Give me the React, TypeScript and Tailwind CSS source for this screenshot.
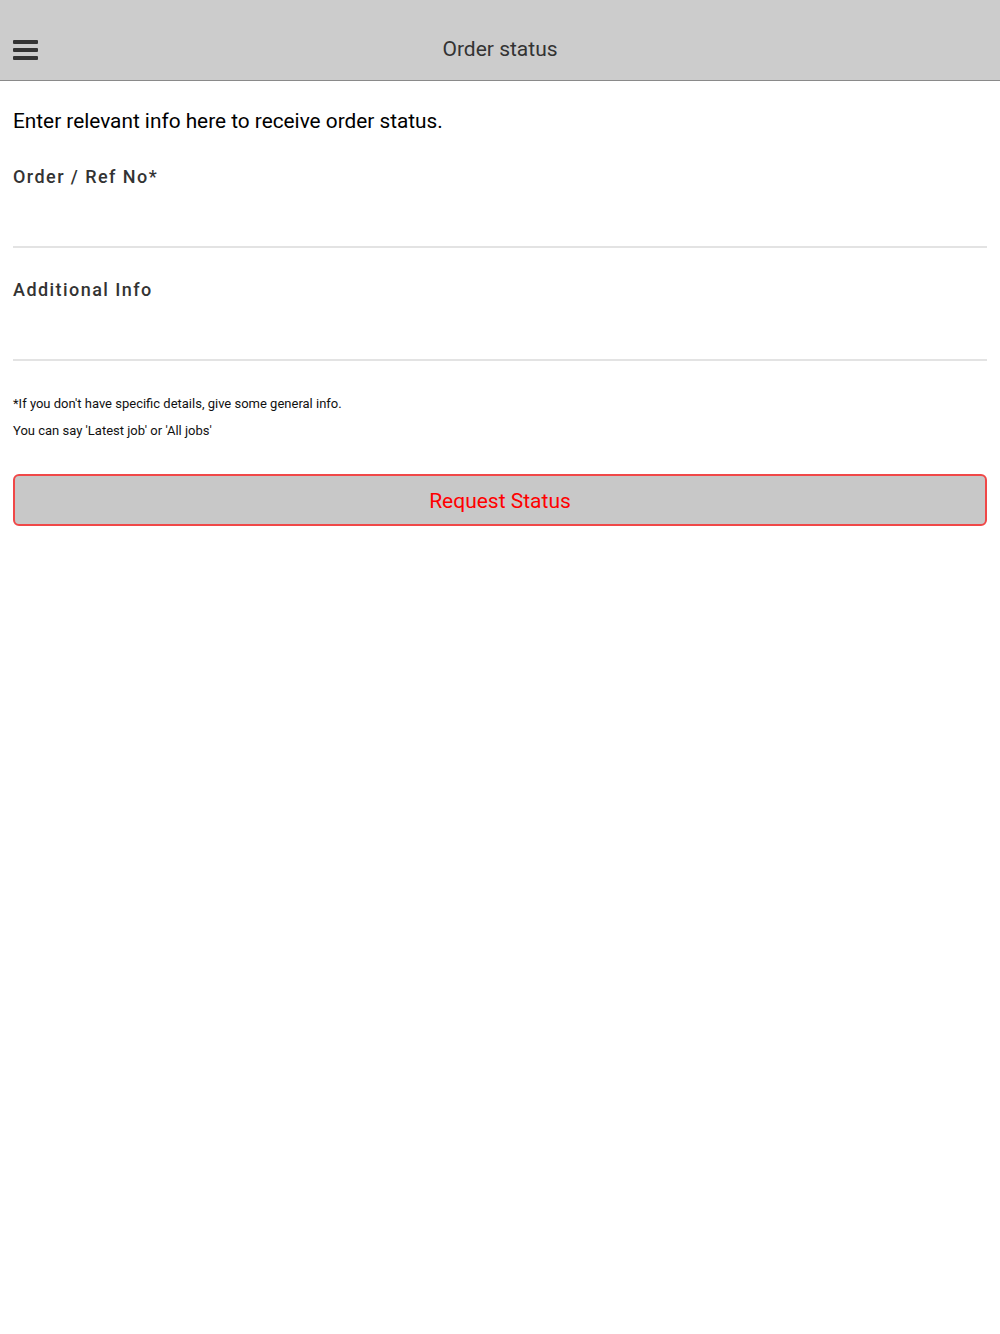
import React from "react";

export default function App() {
  return (
    <div className="min-h-[1334px] bg-white" style={{ fontFamily: "Roboto, 'Liberation Sans', sans-serif" }}>
      <header className="h-[81px] bg-[#cccccc] border-b border-[#8a8a8a] flex items-center relative pt-[20px]">
        <div className="absolute left-[13px] top-[40px] w-[25px] flex flex-col gap-[4px]">
          <div className="h-[4px] bg-[#333333] rounded-[1px]" />
          <div className="h-[4px] bg-[#333333] rounded-[1px]" />
          <div className="h-[4px] bg-[#333333] rounded-[1px]" />
        </div>
        <div className="flex-1 text-center text-[21px] text-[#333333]">Order status</div>
      </header>
      <main className="px-[13px]">
        <p className="mt-[26px] text-[20.8px] leading-[28px] text-black">Enter relevant info here to receive order status.</p>
        <div className="mt-[30px]">
          <label className="block text-[18px] leading-[24px] font-medium tracking-[0.08em] text-[#333333]">Order / Ref No*</label>
          <div className="h-[59px] border-b-2 border-[#e3e3e3]" />
        </div>
        <div className="mt-[30px]">
          <label className="block text-[18px] leading-[24px] font-medium tracking-[0.08em] text-[#333333]">Additional Info</label>
          <div className="h-[59px] border-b-2 border-[#e3e3e3]" />
        </div>
        <p className="mt-[34px] text-[13px] leading-[18px] text-[#111111]">*If you don't have specific details, give some general info.</p>
        <p className="mt-[9px] text-[13px] leading-[18px] text-[#111111]">You can say 'Latest job' or 'All jobs'</p>
        <button className="mt-[34px] w-full h-[52px] pt-[4px] bg-[#c8c8c8] border-2 border-[#f04848] rounded-[6px] text-[21px] text-[#ff0000] flex items-center justify-center">
          Request Status
        </button>
      </main>
    </div>
  );
}
